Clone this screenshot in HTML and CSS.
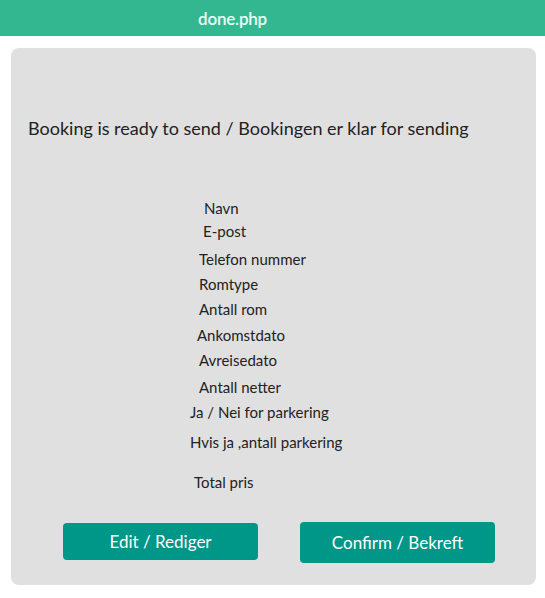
FILE: index.html
```html
<!DOCTYPE html>
<html>
<head>
<meta charset="utf-8">
<link rel="stylesheet" href="styles.css">
</head>
<body>
<header class="topbar"><span class="topbar-title">done.php</span></header>
<main class="card">
  <h1 class="title">Booking is ready to send / Bookingen er klar for sending</h1>
  <div class="fields">
    <p class="field f-navn">Navn</p>
    <p class="field f-epost">E-post</p>
    <p class="field f-tlf">Telefon nummer</p>
    <p class="field f-rom">Romtype</p>
    <p class="field f-antall">Antall rom</p>
    <p class="field f-ank">Ankomstdato</p>
    <p class="field f-avr">Avreisedato</p>
    <p class="field f-net">Antall netter</p>
    <p class="field f-park">Ja / Nei for parkering</p>
    <p class="field f-hvis">Hvis ja ,antall parkering</p>
    <p class="field f-total">Total pris</p>
  </div>
  <div class="actions">
    <button class="btn btn-edit">Edit / Rediger</button>
    <button class="btn btn-confirm">Confirm / Bekreft</button>
  </div>
</main>
</body>
</html>
```
FILE: styles.css
```css
* { box-sizing: border-box; }
body {
  margin: 0;
  background: #fff;
  font-family: Lato, "Open Sans", sans-serif;
  color: #222;
}
.topbar {
  height: 36px;
  background: #33b791;
  padding-left: 198px;
  display: flex;
  align-items: center;
}
.topbar-title {
  color: #e8fff6;
  font-size: 17px;
  font-weight: 600;
  letter-spacing: -0.2px;
}
.card {
  margin: 12px 9px 0 11px;
  height: 537px;
  background: #e0e0e0;
  border-radius: 8px;
  padding: 68px 0 0 17px;
}
.title {
  margin: 0;
  font-size: 18px;
  font-weight: 400;
  line-height: 24px;
}
.fields {
  margin-top: 58px;
  display: flex;
  flex-direction: column;
}
.field {
  margin: 0;
  font-size: 15px;
  line-height: 18px;
}
.f-navn { padding-left: 176px; margin-top: 1px; }
.f-epost { padding-left: 175px; margin-top: 5px; }
.f-tlf { padding-left: 171px; margin-top: 10px; }
.f-rom { padding-left: 171px; margin-top: 7px; }
.f-antall { padding-left: 171px; margin-top: 7px; }
.f-ank { padding-left: 169px; margin-top: 8px; }
.f-avr { padding-left: 171px; margin-top: 7px; }
.f-net { padding-left: 171px; margin-top: 9px; }
.f-park { padding-left: 162px; margin-top: 7px; }
.f-hvis { padding-left: 162px; margin-top: 12px; }
.f-total { padding-left: 166px; margin-top: 22px; }
.actions {
  margin-top: 31px;
  display: flex;
  align-items: flex-start;
  padding-left: 35px;
}
.btn {
  border: 0;
  background: #009688;
  color: #fff;
  font-family: inherit;
  font-size: 17px;
  border-radius: 4px;
  width: 195px;
}
.btn-edit { height: 37px; margin-top: 1px; }
.btn-confirm { height: 41px; margin-left: 42px; }
```
